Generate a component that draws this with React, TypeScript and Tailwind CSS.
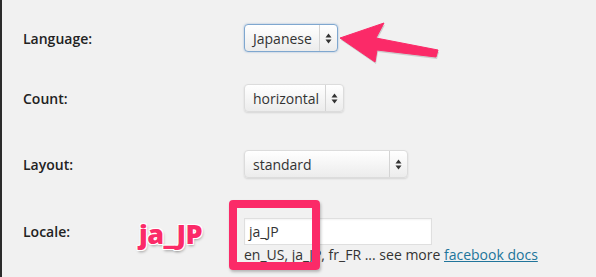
const font = { fontFamily: '"Open Sans", "Noto Sans", sans-serif' };

function Spinner() {
  return (
    <svg width="7" height="11" viewBox="0 0 7 11" className="text-[#333]">
      <path d="M3.5 0.5 L6.5 4.5 L0.5 4.5 Z" fill="currentColor" />
      <path d="M3.5 10.5 L6.5 6.5 L0.5 6.5 Z" fill="currentColor" />
    </svg>
  );
}

function Select({ value, width, focused }: { value: string; width: string; focused?: boolean }) {
  return (
    <div
      className={`flex h-[28px] ${width} items-stretch rounded-[4px] border bg-gradient-to-b from-white to-[#ececec] text-[14px] text-[#333] ${
        focused
          ? "border-[#7fa7cf] shadow-[0_0_2px_rgba(60,120,190,0.5)]"
          : "border-[#dcdcdc] shadow-[0_1px_2px_rgba(0,0,0,0.12)]"
      }`}
    >
      <div className="flex flex-1 items-center whitespace-nowrap pl-[8px]">{value}</div>
      <div className="flex w-[18px] shrink-0 items-center justify-center border-l border-[#d4d4d4]">
        <Spinner />
      </div>
    </div>
  );
}

export default function App() {
  const arrow = "338,38 382,23 374,38 436,50 434,57 375,50 373,62";
  return (
    <div
      className="relative h-[277px] w-[596px] overflow-hidden border-l-2 border-[#2b2b2b] bg-[#f1f1f1] text-[#222]"
      style={font}
    >
      <div className="grid grid-cols-[221px_auto] pl-[21px] pt-[24px]">
        {/* Language */}
        <div className="flex h-[28px] items-center text-[14px] font-semibold">Language:</div>
        <Select value="Japanese" width="w-[94px]" focused />

        {/* Count */}
        <div className="mt-[32px] flex h-[28px] items-center text-[14px] font-semibold">Count:</div>
        <div className="mt-[32px]">
          <Select value="horizontal" width="w-[100px]" />
        </div>

        {/* Layout */}
        <div className="mt-[38px] flex h-[28px] items-center text-[14px] font-semibold">Layout:</div>
        <div className="mt-[38px]">
          <Select value="standard" width="w-[164px]" />
        </div>

        {/* Locale */}
        <div className="mt-[40px] flex h-[27px] items-center text-[14px] font-semibold">Locale:</div>
        <div className="mt-[40px]">
          <div className="flex h-[27px] w-[188px] items-center border border-[#dfdfdf] bg-white pl-[4px] text-[14px] text-[#333] shadow-[inset_0_1px_2px_rgba(0,0,0,0.05)]">
            ja_JP
          </div>
          <div className="mt-[1px] whitespace-nowrap text-[14px] leading-[18px] text-[#333]">
            en_US, ja_JP, fr_FR ... see more{" "}
            <span className="text-[#21759b] underline">facebook docs</span>
          </div>
        </div>
      </div>

      {/* annotation: arrow */}
      <svg className="absolute left-0 top-0" width="596" height="277" viewBox="0 0 596 277">
        <polygon points={arrow} fill="#8a8a8a" opacity="0.35" transform="translate(1,2)" />
        <polygon points={arrow} fill="#fb2a68" strokeLinejoin="round" stroke="#fb2a68" strokeWidth="1" />
      </svg>

      {/* annotation: box around locale value */}
      <div className="absolute left-[227px] top-[200px] h-[70px] w-[91px] rounded-[4px] border-[8px] border-[#fb2a68] shadow-[1px_2px_3px_rgba(0,0,0,0.25)]" />

      {/* annotation: label */}
      <div
        className="absolute left-[137px] top-[214px] text-[27px] font-extrabold tracking-[-0.5px] text-[#fb2a68]"
        style={{
          fontFamily: '"Open Sans", "Noto Sans", sans-serif',
          textShadow:
            "0 0 2px #fff, 1px 1px 0 #fff, -1px -1px 0 #fff, 1px -1px 0 #fff, -1px 1px 0 #fff, 1px 2px 3px rgba(0,0,0,0.35)",
        }}
      >
        ja_JP
      </div>
    </div>
  );
}
